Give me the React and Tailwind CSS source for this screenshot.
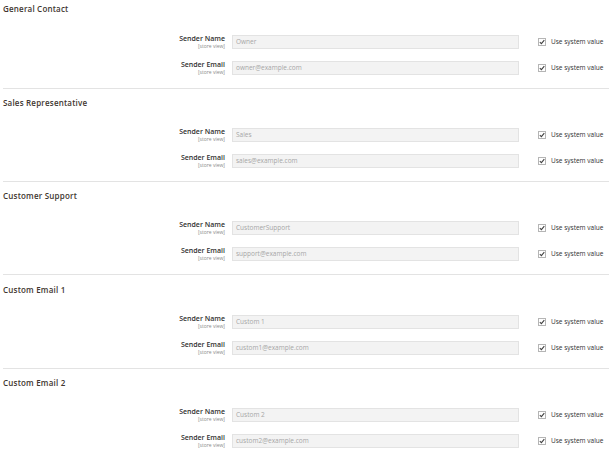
import React from "react";

const sections = [
  { title: "General Contact", name: "Owner", email: "owner@example.com" },
  { title: "Sales Representative", name: "Sales", email: "sales@example.com" },
  { title: "Customer Support", name: "CustomerSupport", email: "support@example.com" },
  { title: "Custom Email 1", name: "Custom 1", email: "custom1@example.com" },
  { title: "Custom Email 2", name: "Custom 2", email: "custom2@example.com" },
];

function Check() {
  return (
    <div className="flex items-center gap-[5px]">
      <div className="w-[8px] h-[8px] border border-[#b5b5b5] bg-white flex items-center justify-center">
        <svg width="6" height="6" viewBox="0 0 6 6">
          <path d="M0.8 3.1 L2.4 4.6 L5.3 1.2" stroke="#404040" strokeWidth="1.1" fill="none" />
        </svg>
      </div>
      <span className="text-[6.5px] leading-[8px] text-[#303030]">Use system value</span>
    </div>
  );
}

function Row({ label, value }) {
  return (
    <div className="flex items-start h-[14px]">
      <div className="w-[225px] flex flex-col items-end">
        <span className="text-[7px] leading-[8px] font-semibold text-[#303030]">{label}</span>
        <span className="text-[5px] leading-[6px] text-[#8a8a8a]">[store view]</span>
      </div>
      <div className="ml-[7px] w-[287px] h-[14px] bg-[#f3f3f3] border border-[#e3e3e3] flex items-center pl-[3px]">
        <span className="text-[6.5px] text-[#a6a6a6] leading-[8px]">{value}</span>
      </div>
      <div className="ml-[19px] h-[14px] flex items-center">
        <Check />
      </div>
    </div>
  );
}

export default function App() {
  return (
    <div className="w-[612px] h-[454px] overflow-hidden bg-white" style={{ fontFamily: '"Open Sans", sans-serif' }}>
      {sections.map((s, i) => (
        <div
          key={i}
          className={`${i === 0 ? "pt-[4px]" : i === 3 ? "pt-[10px]" : "pt-[9px]"} pb-[13px] border-b border-[#e3e3e3] mx-[3px]`}
        >
          <div className="text-[8px] leading-[10px] font-semibold tracking-[0.2px] text-[#41362f]">{s.title}</div>
          <div className={`${i === 0 ? "mt-[21px]" : "mt-[20px]"} flex flex-col gap-[12px] -ml-[3px]`}>
            <Row label="Sender Name" value={s.name} />
            <Row label="Sender Email" value={s.email} />
          </div>
        </div>
      ))}
    </div>
  );
}
